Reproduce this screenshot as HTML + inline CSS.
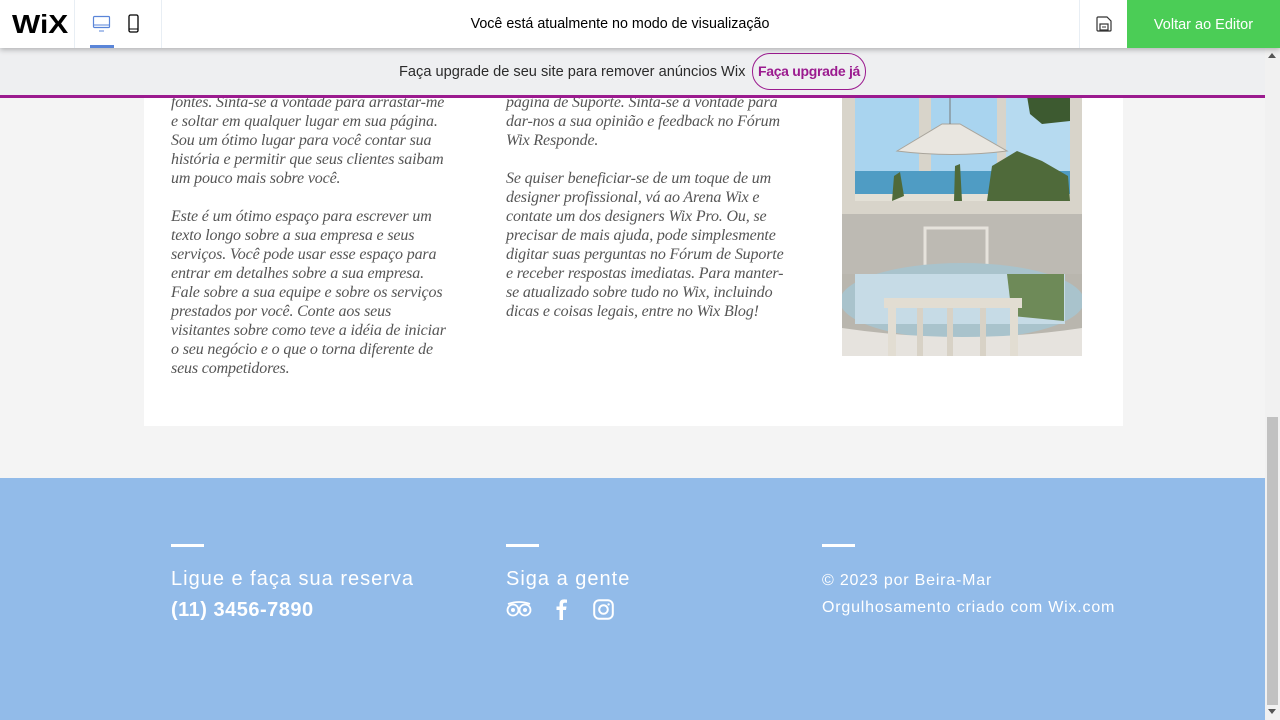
<!DOCTYPE html>
<html><head><meta charset="utf-8"><style>
*{margin:0;padding:0;box-sizing:border-box}
body{width:1280px;height:720px;overflow:hidden;background:#f4f4f4;position:relative;font-family:"Liberation Sans",sans-serif}
.abs{position:absolute}
.top{left:0;top:0;width:1280px;height:48px;background:#fff;box-shadow:0 2px 5px rgba(0,0,0,.25);z-index:5}
.bar{left:0;top:48px;width:1265px;height:50px;background:#eeeff1;border-bottom:3px solid #9b1b8f;z-index:4}
.col{font-family:"Liberation Serif",serif;font-style:italic;font-size:16px;line-height:19px;color:#555;letter-spacing:-.15px}
.foot{left:0;top:478px;width:1265px;height:242px;background:#92bbe9;color:#fff}
.ln{width:33px;height:3px;background:#fff;top:66px}
.h{font-size:20px;letter-spacing:1px;top:90px;white-space:nowrap}
</style></head><body>
<div class="abs top">
  <div class="abs" style="left:12px;top:9px;font-size:26px;font-weight:bold;letter-spacing:0px;color:#000;font-family:'Liberation Sans',sans-serif;transform:scaleX(1.15);transform-origin:left">WiX</div>
  <div class="abs" style="left:74px;top:0;width:1px;height:48px;background:#e8eef4"></div>
  <div class="abs" style="left:161px;top:0;width:1px;height:48px;background:#e8eef4"></div>
  <svg class="abs" style="left:92px;top:14px" width="20" height="20" viewBox="0 0 20 20"><rect x="1.5" y="2.5" width="16" height="11" rx="1" fill="none" stroke="#5a85d8" stroke-width="1.2"/><line x1="1.5" y1="11" x2="17.5" y2="11" stroke="#5a85d8"/><line x1="7" y1="17" x2="12" y2="17" stroke="#5a85d8"/></svg>
  <div class="abs" style="left:90px;top:45px;width:24px;height:3px;background:#5a85d8"></div>
  <svg class="abs" style="left:127px;top:14px" width="14" height="20" viewBox="0 0 14 20"><rect x="2" y="1" width="9" height="17" rx="1.5" fill="none" stroke="#000" stroke-width="1.3"/><line x1="2" y1="15" x2="11" y2="15" stroke="#000"/></svg>
  <div class="abs" style="left:0;width:1240px;top:16px;text-align:center;font-size:14.3px;color:#000">Você está atualmente no modo de visualização</div>
  <div class="abs" style="left:1079px;top:0;width:1px;height:48px;background:#e8eef4"></div>
  <svg class="abs" style="left:1095px;top:15px" width="18" height="18" viewBox="0 0 18 18"><path d="M2 3a1 1 0 0 1 1-1h9l4 4v9a1 1 0 0 1-1 1H3a1 1 0 0 1-1-1z" fill="none" stroke="#333" stroke-width="1.2"/><rect x="5" y="9" width="8" height="6" fill="none" stroke="#333" stroke-width="1.2"/><line x1="7" y1="12" x2="11" y2="12" stroke="#333"/></svg>
  <div class="abs" style="left:1127px;top:0;width:153px;height:48px;background:#4bcd56;color:#fff;font-size:14.5px;text-align:center;line-height:50px">Voltar ao Editor</div>
</div>
<div class="abs bar">
  <div class="abs" style="left:399px;top:16px;font-size:14.6px;color:#2b2b2b;white-space:nowrap">Faça upgrade de seu site para remover anúncios Wix</div>
  <div class="abs" style="left:752px;top:5px;width:114px;height:37px;border:1px solid #9b1b8f;border-radius:18px;color:#9b1b8f;font-size:14px;font-weight:bold;line-height:35px;text-align:center;white-space:nowrap;letter-spacing:-.3px">Faça upgrade já</div>
</div>
<div class="abs" style="left:144px;top:80px;width:979px;height:346px;background:#fff"></div>
<div class="abs col" style="left:171px;top:93px;width:300px">fontes. Sinta-se à vontade para arrastar-me<br>e soltar em qualquer lugar em sua página.<br>Sou um ótimo lugar para você contar sua<br>história e permitir que seus clientes saibam<br>um pouco mais sobre você.<br><br>Este é um ótimo espaço para escrever um<br>texto longo sobre a sua empresa e seus<br>serviços. Você pode usar esse espaço para<br>entrar em detalhes sobre a sua empresa.<br>Fale sobre a sua equipe e sobre os serviços<br>prestados por você. Conte aos seus<br>visitantes sobre como teve a idéia de iniciar<br>o seu negócio e o que o torna diferente de<br>seus competidores.</div>
<div class="abs col" style="left:506px;top:93px;width:310px">página de Suporte. Sinta-se à vontade para<br>dar-nos a sua opinião e feedback no Fórum<br>Wix Responde.<br><br>Se quiser beneficiar-se de um toque de um<br>designer profissional, vá ao Arena Wix e<br>contate um dos designers Wix Pro. Ou, se<br>precisar de mais ajuda, pode simplesmente<br>digitar suas perguntas no Fórum de Suporte<br>e receber respostas imediatas. Para manter-<br>se atualizado sobre tudo no Wix, incluindo<br>dicas e coisas legais, entre no Wix Blog!</div>
<svg class="abs" style="left:842px;top:96px" width="240" height="260" viewBox="0 0 240 260">
  <rect width="240" height="260" fill="#b9b6ae"/>
  <rect x="0" y="0" width="240" height="125" fill="#d8d4ca"/>
  <rect x="13" y="0" width="64" height="105" fill="#a9d4ef"/>
  <rect x="89" y="0" width="66" height="105" fill="#a9d4ef"/>
  <rect x="164" y="0" width="64" height="105" fill="#b6daf0"/>
  <rect x="13" y="75" width="215" height="25" fill="#4f9cc4"/>
  <rect x="13" y="98" width="215" height="7" fill="#e3e0d6"/>
  <path d="M50 105 L52 80 L58 76 L62 100Z M112 105 L113 70 L118 68 L120 105Z M145 105 L150 70 L175 55 L200 65 L226 80 L228 105Z" fill="#4f6a3a"/>
  <path d="M185 0 L228 0 L228 25 L200 28 L188 18Z" fill="#3d5a30"/>
  <path d="M55 55 L100 28 L118 28 L165 55 Q110 62 55 55Z" fill="#e9e6e0" stroke="#a9a59c"/>
  <line x1="108" y1="2" x2="108" y2="28" stroke="#777"/>
  <rect x="0" y="118" width="240" height="60" fill="#bdbab3"/>
  <rect x="83" y="132" width="62" height="45" fill="none" stroke="#e6e3dc" stroke-width="3"/>
  <ellipse cx="120" cy="205" rx="122" ry="38" fill="#a9c3cc"/>
  <rect x="13" y="178" width="210" height="50" fill="#c6dbe6"/>
  <path d="M165 178 L222 178 L222 225 L170 220Z" fill="#6e8a58"/>
  <path d="M0 232 Q120 250 240 232 V260 H0Z" fill="#e6e3de"/>
  <rect x="42" y="202" width="138" height="10" fill="#e2ddd2"/>
  <rect x="46" y="208" width="8" height="52" fill="#e2ddd2"/><rect x="168" y="208" width="8" height="52" fill="#e2ddd2"/>
  <rect x="75" y="212" width="6" height="48" fill="#d8d2c6"/><rect x="105" y="212" width="6" height="48" fill="#d8d2c6"/><rect x="138" y="212" width="6" height="48" fill="#d8d2c6"/>
</svg>
<div class="abs foot">
  <div class="abs ln" style="left:171px"></div>
  <div class="abs ln" style="left:506px"></div>
  <div class="abs ln" style="left:822px"></div>
  <div class="abs h" style="left:171px">Ligue e faça sua reserva</div>
  <div class="abs" style="left:171px;top:121px;font-size:20px;font-weight:bold;letter-spacing:.5px">(11) 3456-7890</div>
  <div class="abs h" style="left:506px">Siga a gente</div>
  <svg class="abs" style="left:506px;top:122px" width="26" height="18" viewBox="0 0 26 18"><circle cx="7" cy="10" r="5.5" fill="none" stroke="#fff" stroke-width="1.8"/><circle cx="19" cy="10" r="5.5" fill="none" stroke="#fff" stroke-width="1.8"/><circle cx="7" cy="10" r="2" fill="#fff"/><circle cx="19" cy="10" r="2" fill="#fff"/><path d="M2 4 Q13 0 24 4" fill="none" stroke="#fff" stroke-width="1.8"/></svg>
  <svg class="abs" style="left:554px;top:120px" width="14" height="22" viewBox="0 0 14 22"><path d="M9 22V12h3l.5-3.5H9V6.5c0-1 .4-1.7 1.8-1.7H13V1.6C12.5 1.5 11.3 1.4 10 1.4 7.2 1.4 5.5 3 5.5 6v2.5h-3V12h3v10z" fill="#fff"/></svg>
  <svg class="abs" style="left:593px;top:121px" width="21" height="21" viewBox="0 0 21 21"><rect x="1.2" y="1.2" width="18.6" height="18.6" rx="5" fill="none" stroke="#fff" stroke-width="2"/><circle cx="10.5" cy="10.5" r="4.3" fill="none" stroke="#fff" stroke-width="2"/><circle cx="15.6" cy="5.4" r="1.2" fill="#fff"/></svg>
  <div class="abs" style="left:822px;top:89px;font-size:16px;letter-spacing:.8px;line-height:27px;white-space:nowrap">© 2023 por Beira-Mar<br>Orgulhosamento criado com Wix.com</div>
</div>
<div class="abs" style="left:1265px;top:48px;width:15px;height:672px;background:#f1f1f1"></div>
<div class="abs" style="left:1267px;top:417px;width:11px;height:288px;background:#c1c1c1"></div>
<div class="abs" style="left:1268px;top:53px;width:0;height:0;border-left:4px solid transparent;border-right:4px solid transparent;border-bottom:5px solid #555"></div>
<div class="abs" style="left:1268px;top:709px;width:0;height:0;border-left:4px solid transparent;border-right:4px solid transparent;border-top:5px solid #555"></div>
</body></html>
